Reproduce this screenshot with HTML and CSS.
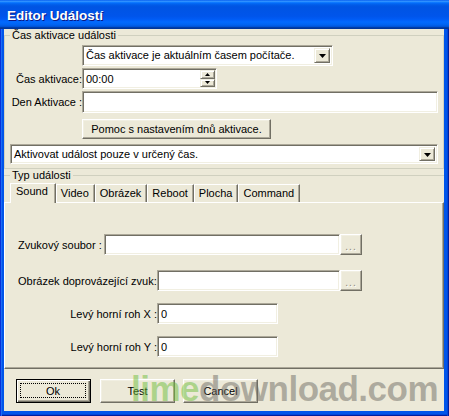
FILE: index.html
```html
<!DOCTYPE html>
<html lang="cs">
<head>
<meta charset="utf-8">
<title>Editor Událostí</title>
<link rel="stylesheet" href="styles.css">
</head>
<body>
<div class="window">
  <div class="titlebar"><span class="title">Editor Událostí</span></div>
  <div class="frame">
    <div class="client">
      <fieldset class="group g1">
        <legend>Čas aktivace události</legend>
        <div class="row row-combo1">
          <div class="combo combo1">
            <span class="combo-text">Čas aktivace je aktuálním časem počítače.</span>
            <span class="dd-btn"><svg width="7" height="4" viewBox="0 0 7 4"><polygon points="0,0 7,0 3.5,4" fill="#000"/></svg></span>
          </div>
        </div>
        <div class="row row-time">
          <span class="lbl">Čas aktivace:</span>
          <div class="field spin-field">
            <span class="val">00:00</span>
            <span class="spin">
              <span class="spin-btn"><svg width="5" height="3" viewBox="0 0 5 3"><polygon points="2.5,0 5,3 0,3" fill="#000"/></svg></span>
              <span class="spin-btn"><svg width="5" height="3" viewBox="0 0 5 3"><polygon points="0,0 5,0 2.5,3" fill="#000"/></svg></span>
            </span>
          </div>
        </div>
        <div class="row row-day">
          <span class="lbl">Den Aktivace :</span>
          <div class="field grow"></div>
        </div>
        <div class="row row-help">
          <div class="btn btn-help">Pomoc s nastavením dnů aktivace.</div>
        </div>
        <div class="row row-combo2">
          <div class="combo grow">
            <span class="combo-text">Aktivovat událost pouze v určený čas.</span>
            <span class="dd-btn"><svg width="7" height="4" viewBox="0 0 7 4"><polygon points="0,0 7,0 3.5,4" fill="#000"/></svg></span>
          </div>
        </div>
      </fieldset>

      <fieldset class="group g2">
        <legend>Typ události</legend>
        <div class="tabs">
          <span class="tab active">Sound</span>
          <span class="tab">Video</span>
          <span class="tab">Obrázek</span>
          <span class="tab">Reboot</span>
          <span class="tab">Plocha</span>
          <span class="tab">Command</span>
        </div>
        <div class="panel">
          <div class="prow prow1">
            <span class="plbl plbl1">Zvukový soubor :</span>
            <div class="field in1"></div>
            <div class="btn dots">...</div>
          </div>
          <div class="prow prow2">
            <span class="plbl plbl2">Obrázek doprovázející zvuk:</span>
            <div class="field in2"></div>
            <div class="btn dots">...</div>
          </div>
          <div class="prow prow3">
            <span class="plbl plbl3">Levý horní roh X :</span>
            <div class="field in3"><span class="val">0</span></div>
          </div>
          <div class="prow prow4">
            <span class="plbl plbl3">Levý horní roh Y :</span>
            <div class="field in3"><span class="val">0</span></div>
          </div>
        </div>
      </fieldset>

      <div class="buttons">
        <div class="btn btn-ok"><span class="focus">Ok</span></div>
        <div class="btn btn-test">Test</div>
        <div class="btn btn-cancel">Cancel</div>
      </div>

      <div class="watermark"><span class="wm-lime">lime</span><span class="wm-rest">download.com</span></div>
    </div>
  </div>
</div>
</body>
</html>
```

FILE: styles.css
```css
* { box-sizing: border-box; }
html, body { margin: 0; padding: 0; }
body {
  width: 449px;
  height: 416px;
  overflow: hidden;
  font-family: "Liberation Sans", Arial, sans-serif;
  font-size: 11px;
  color: #000;
  background: #fff;
}
.window {
  width: 449px;
  height: 416px;
  display: flex;
  flex-direction: column;
}
.titlebar {
  height: 29px;
  flex: none;
  display: flex;
  align-items: center;
  padding: 1px 0 0 7px;
  background: linear-gradient(to bottom, #0058EE 0%, #3593FF 4%, #288EFF 6%, #127DFF 8%, #036FFC 10%, #0262EE 14%, #0057E5 20%, #0054E3 24%, #0055EB 56%, #005BF5 66%, #026AFE 76%, #0062EF 86%, #0052D6 92%, #0040AB 94%, #003092 100%);
}
.title {
  color: #fff;
  font-weight: bold;
  font-size: 13.5px;
  text-shadow: 1px 1px 0 #0A1883;
}
.frame {
  flex: 1;
  display: flex;
  padding: 0 5px 5px 4px;
  background: #0055EA;
  box-shadow: inset 1px 0 0 #0831D9, inset 2px 0 0 #1C6CF5, inset -1px 0 0 #001EA0, inset -2px 0 0 #0046D8, inset 0 -1px 0 #001EA0, inset 0 -2px 0 #0046D8;
}
.client {
  flex: 1;
  background: #ECE9D8;
  position: relative;
  overflow: hidden;
}

/* group boxes */
.group {
  margin: 0;
  min-width: 0;
}
.group legend {
  padding: 0 2px;
  font-size: 11px;
  line-height: 12px;
}
.g1 {
  padding: 0 5px 4px 5px;
  border: 1px solid #D0D0BF;
}
.g2 {
  padding: 0;
  border: 0;
  border-top: 1px solid #D0D0BF;
}
.g2 legend { margin-left: 6px; }

.row {
  display: flex;
  align-items: center;
}
.lbl {
  width: 72px;
  flex: none;
  text-align: right;
  white-space: nowrap;
}
.grow { flex: 1; }

.row-combo1 { margin-top: 4px; padding-left: 72px; }
.row-time { margin-top: 2px; }
.row-day { margin-top: 2px; }
.row-help { margin-top: 6px; padding-left: 72px; }
.row-combo2 { margin-top: 5px; }

/* sunken field */
.field {
  height: 21px;
  background: #fff;
  border: 1px solid;
  border-color: #ACA899 #fff #fff #ACA899;
  box-shadow: inset 1px 1px 0 #716F64, inset -1px -1px 0 #F1EFE2;
  display: flex;
  align-items: center;
  padding: 0 2px 0 3px;
}
.row-day .field { height: 22px; }
.val { flex: 1; white-space: nowrap; }

.combo {
  height: 21px;
  background: #fff;
  border: 1px solid;
  border-color: #ACA899 #fff #fff #ACA899;
  box-shadow: inset 1px 1px 0 #716F64, inset -1px -1px 0 #F1EFE2;
  display: flex;
  align-items: stretch;
  padding: 2px;
}
.combo1 { width: 251px; }
.row-combo2 .combo { height: 20px; }
.combo-text {
  flex: 1;
  padding-left: 1px;
  line-height: 15px;
  white-space: nowrap;
  overflow: hidden;
}
.dd-btn {
  width: 16px;
  flex: none;
  background: #ECE9D8;
  border: 1px solid;
  border-color: #F1EFE2 #716F64 #716F64 #F1EFE2;
  box-shadow: inset 1px 1px 0 #fff, inset -1px -1px 0 #ACA899;
  display: flex;
  align-items: center;
  justify-content: center;
}
.dd-btn svg { display: block; margin-top: 1px; }

.spin-field { width: 135px; padding-right: 1px; }
.spin {
  width: 15px;
  align-self: stretch;
  display: flex;
  flex-direction: column;
  padding: 1px 0;
}
.spin-btn {
  flex: 1;
  background: #ECE9D8;
  border: 1px solid;
  border-color: #F1EFE2 #716F64 #716F64 #F1EFE2;
  box-shadow: inset 1px 1px 0 #fff, inset -1px -1px 0 #ACA899;
  display: flex;
  align-items: center;
  justify-content: center;
}
.spin-btn svg { display: block; }

/* raised buttons */
.btn {
  background: #ECE9D8;
  border: 1px solid;
  border-color: #fff #716F64 #716F64 #fff;
  box-shadow: inset -1px -1px 0 #ACA899, inset 1px 1px 0 #F1EFE2;
  display: flex;
  align-items: center;
  justify-content: center;
  white-space: nowrap;
}
.btn-help { width: 189px; height: 20px; }

/* tabs */
.tabs {
  margin-top: 2px;
  height: 20px;
  display: flex;
  align-items: flex-end;
  padding-left: 8px;
  position: relative;
  z-index: 1;
  margin-bottom: -1px;
}
.tab {
  height: 18px;
  padding: 0 5px 0 4px;
  border-top: 1px solid #fff;
  border-left: 1px solid #fff;
  border-right: 1px solid #716F64;
  box-shadow: inset -1px 0 0 #ACA899;
  background: #ECE9D8;
  line-height: 16px;
  margin-bottom: 1px;
  white-space: nowrap;
}
.tab.active {
  height: 20px;
  margin: 0 0 0 -2px;
  padding: 0 7px 0 5px;
  line-height: 14px;
}
.panel {
  height: 167px;
  border: 1px solid;
  border-color: #fff #716F64 #716F64 #fff;
  box-shadow: inset -1px -1px 0 #ACA899;
  padding: 31px 0 0 13px;
}
.prow {
  display: flex;
  align-items: center;
  height: 21px;
}
.prow2 { margin-top: 15px; }
.prow3 { margin-top: 12px; }
.prow4 { margin-top: 12px; }
.plbl { flex: none; white-space: nowrap; }
.plbl1 { width: 86px; }
.plbl2 { width: 139px; }
.plbl3 { width: 139px; text-align: right; }
.in1 { width: 236px; }
.in2 { width: 183px; }
.in3 { width: 121px; }
.dots {
  width: 22px;
  height: 21px;
  color: #8A877A;
  text-shadow: 1px 1px 0 #fff;
  font-size: 10px;
  letter-spacing: 1px;
  padding-top: 3px;
}

/* bottom buttons */
.buttons {
  display: flex;
  margin-top: 10px;
  padding-left: 12px;
}
.buttons .btn { width: 75px; height: 24px; }
.btn-test { margin-left: 9px; }
.btn-cancel { margin-left: 8px; }
.btn-ok {
  border: 1px solid #000;
  box-shadow: inset 1px 1px 0 #fff, inset -1px -1px 0 #716F64, inset -2px -2px 0 #ACA899;
  padding: 3px 4px 4px 3px;
  align-items: stretch;
}
.focus {
  flex: 1;
  border: 1px dotted #000;
  display: flex;
  align-items: center;
  justify-content: center;
}

/* watermark overlay (part of the captured image) */
.watermark {
  position: absolute;
  left: 127px;
  top: 340px;
  font-family: "Liberation Sans", Arial, sans-serif;
  font-weight: bold;
  font-size: 35px;
  letter-spacing: -0.5px;
  line-height: 40px;
  white-space: nowrap;
  pointer-events: none;
}
.wm-lime { color: rgba(110, 190, 60, 0.5); }
.wm-rest { color: rgba(110, 108, 100, 0.5); }
```
